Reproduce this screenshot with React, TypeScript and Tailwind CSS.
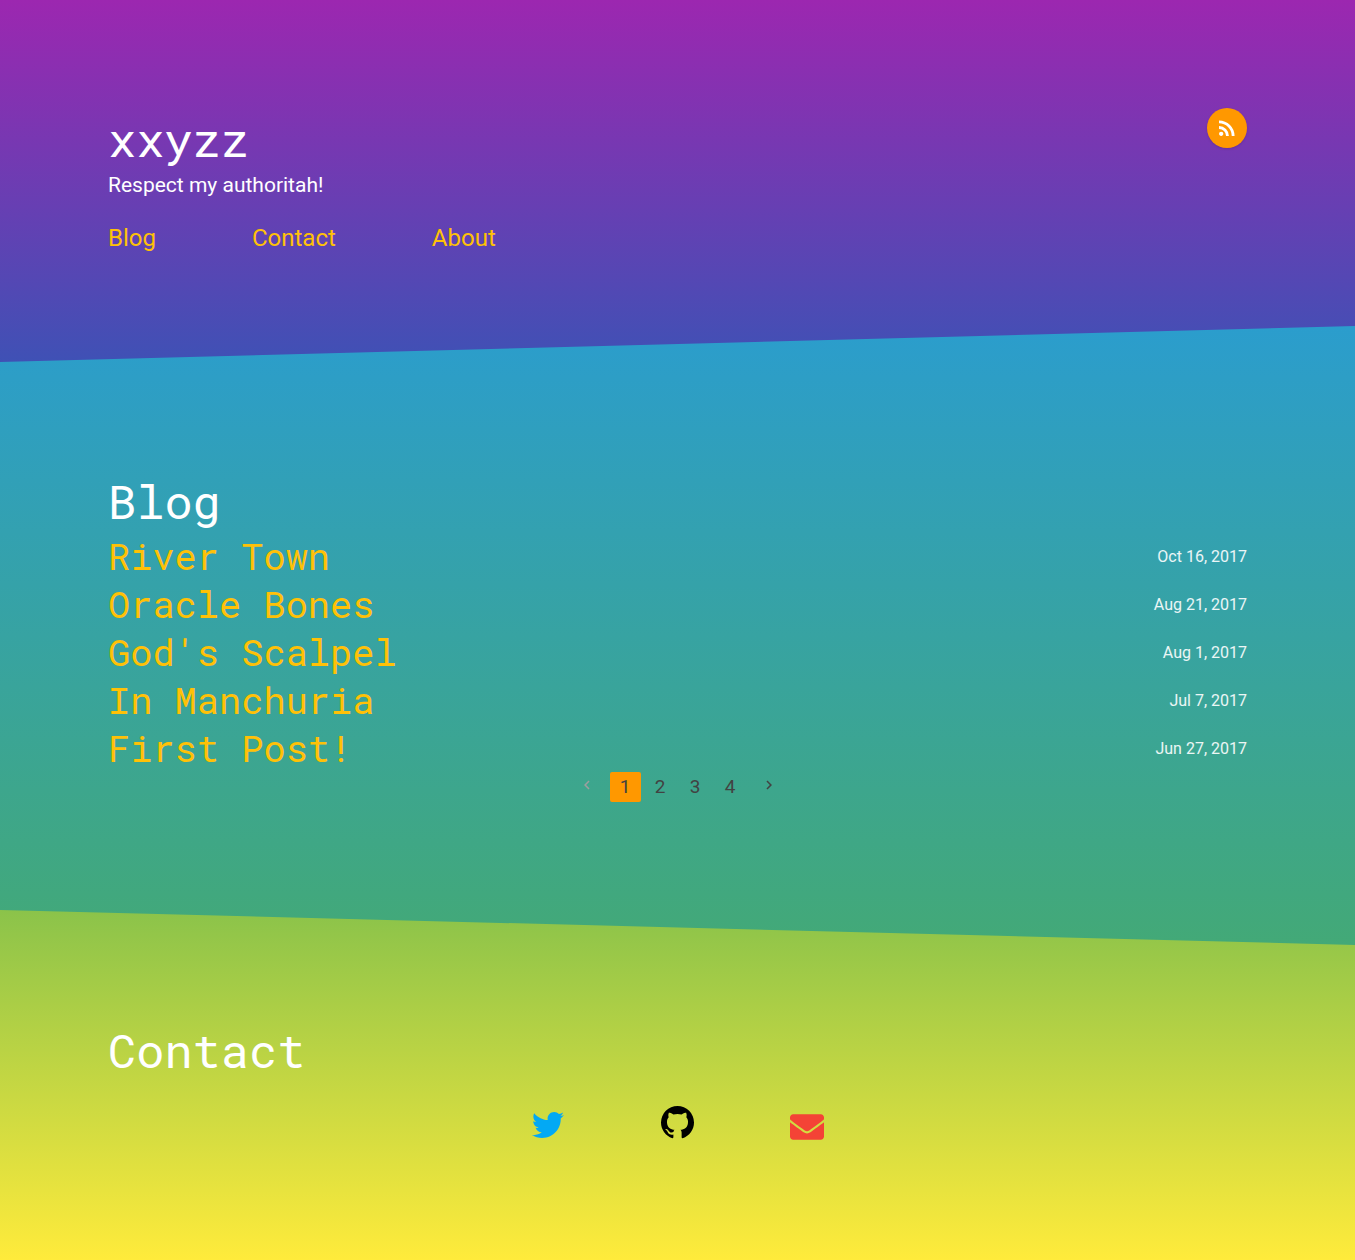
import { FaTwitter, FaEnvelope } from 'react-icons/fa';

const nav = ['Blog', 'Contact', 'About'];

const posts = [
  { title: 'River Town', date: 'Oct 16, 2017' },
  { title: 'Oracle Bones', date: 'Aug 21, 2017' },
  { title: "God's Scalpel", date: 'Aug 1, 2017' },
  { title: 'In Manchuria', date: 'Jul 7, 2017' },
  { title: 'First Post!', date: 'Jun 27, 2017' },
];

const heading =
  "font-['Roboto_Mono','Liberation_Mono',monospace] text-[47px] leading-[56px] font-normal";

const icons = {
  rss: 'M6.18,15.64A2.18,2.18 0 0,1 8.36,17.82C8.36,19 7.38,20 6.18,20C5,20 4,19 4,17.82A2.18,2.18 0 0,1 6.18,15.64M4,4.44A15.56,15.56 0 0,1 19.56,20H16.73A12.73,12.73 0 0,0 4,7.27V4.44M4,10.1A9.9,9.9 0 0,1 13.9,20H11.07A7.07,7.07 0 0,0 4,12.93V10.1Z',
  left: 'M15.41,16.58L10.83,12L15.41,7.41L14,6L8,12L14,18L15.41,16.58Z',
  right: 'M8.59,16.58L13.17,12L8.59,7.41L10,6L16,12L10,18L8.59,16.58Z',
  github:
    'M12,2A10,10 0 0,0 2,12C2,16.42 4.87,20.17 8.84,21.5C9.34,21.58 9.5,21.27 9.5,21V19.31C6.73,19.91 6.14,17.97 6.14,17.97C5.68,16.81 5.03,16.5 5.03,16.5C4.12,15.88 5.1,15.9 5.1,15.9C6.1,15.97 6.63,16.93 6.63,16.93C7.5,18.45 8.97,18 9.54,17.76C9.63,17.11 9.89,16.67 10.17,16.42C7.95,16.17 5.62,15.31 5.62,11.5C5.62,10.39 6,9.5 6.65,8.79C6.55,8.54 6.2,7.5 6.75,6.15C6.75,6.15 7.59,5.88 9.5,7.17C10.29,6.95 11.15,6.84 12,6.84C12.85,6.84 13.71,6.95 14.5,7.17C16.41,5.88 17.25,6.15 17.25,6.15C17.8,7.5 17.45,8.54 17.35,8.79C18,9.5 18.38,10.39 18.38,11.5C18.38,15.32 16.04,16.16 13.81,16.41C14.17,16.72 14.5,17.33 14.5,18.26V21C14.5,21.27 14.66,21.59 15.17,21.5C19.14,20.16 22,16.42 22,12A10,10 0 0,0 12,2Z',
};

function Icon({
  name,
  className,
  viewBox = '0 0 24 24',
}: {
  name: keyof typeof icons;
  className?: string;
  viewBox?: string;
}) {
  return (
    <svg viewBox={viewBox} fill="currentColor" className={className} aria-hidden="true">
      <path d={icons[name]} />
    </svg>
  );
}

export default function App() {
  return (
    <div className="flex min-h-screen flex-col bg-[#ffeb3b] font-[Roboto,sans-serif] text-white">
      <header className="flex items-start justify-between bg-linear-to-b/srgb from-[#9c27b0] to-[#3f51b5] p-[108px]">
        <div>
          <h1 className={heading + ' mt-[3px]'}>xxyzz</h1>
          <p className="mt-[3px] text-[21px] leading-[30px]">Respect my authoritah!</p>
          <nav className="mt-[22px] flex gap-24 text-2xl leading-8 text-[#ffc107]">
            {nav.map((n) => (
              <a key={n} href={'#' + n.toLowerCase()}>
                {n}
              </a>
            ))}
          </nav>
        </div>
        <a
          href="#rss"
          aria-label="RSS feed"
          className="flex size-10 items-center justify-center rounded-full bg-[#ff9800] shadow"
        >
          <Icon name="rss" className="size-6" />
        </a>
      </header>

      <main
        id="blog"
        className="-mt-9 bg-linear-to-b/srgb from-[#2b9dcd] to-[#43a977] px-[108px] pt-[147px] pb-[143px] [clip-path:polygon(0_36px,100%_0,100%_100%,0_100%)]"
      >
        <h2 className={heading}>Blog</h2>
        <ul className="mt-[3px]">
          {posts.map((p) => (
            <li key={p.title} className="flex h-12 items-center justify-between">
              <a
                href="#post"
                className="font-['Roboto_Mono','Liberation_Mono',monospace] text-[37px] leading-[48px] text-[#ffc107]"
              >
                {p.title}
              </a>
              <time className="pt-0.5 text-base text-white/90">{p.date}</time>
            </li>
          ))}
        </ul>
        <nav
          aria-label="Pagination"
          className="flex items-start justify-center gap-1 text-[19px] leading-[30px] text-[#424242]"
        >
          <button
            type="button"
            aria-label="Previous page"
            disabled
            className="mr-2.5 pt-1 text-[#9e9e9e]"
          >
            <Icon name="left" className="size-[18px]" />
          </button>
          {[1, 2, 3, 4].map((n) => (
            <button
              key={n}
              type="button"
              className={n === 1 ? 'w-[31px] rounded-xs bg-[#ff9800]' : 'w-[31px]'}
            >
              {n}
            </button>
          ))}
          <button type="button" aria-label="Next page" className="ml-2.5 pt-1">
            <Icon name="right" className="size-[18px]" />
          </button>
        </nav>
      </main>

      <footer
        id="contact"
        className="-mt-[35px] grow bg-linear-to-b/srgb from-[#8bc34a] to-[#ffeb3b] px-[108px] pt-28 pb-[103px] [clip-path:polygon(0_0,100%_35px,100%_100%,0_100%)]"
      >
        <h2 className={heading}>Contact</h2>
        <div className="mt-6 flex items-center justify-center gap-24">
          <a
            href="#twitter"
            aria-label="Twitter"
            className="flex w-[34px] justify-center pt-1 text-[#03a9f4]"
          >
            <FaTwitter className="size-8" />
          </a>
          <a href="#github" aria-label="GitHub" className="pb-0.5 text-black">
            <Icon name="github" viewBox="2 2 20 20" className="size-[33px]" />
          </a>
          <a href="#email" aria-label="Email" className="pt-2 text-[#f44336]">
            <FaEnvelope className="size-[34px]" />
          </a>
        </div>
      </footer>
    </div>
  );
}
